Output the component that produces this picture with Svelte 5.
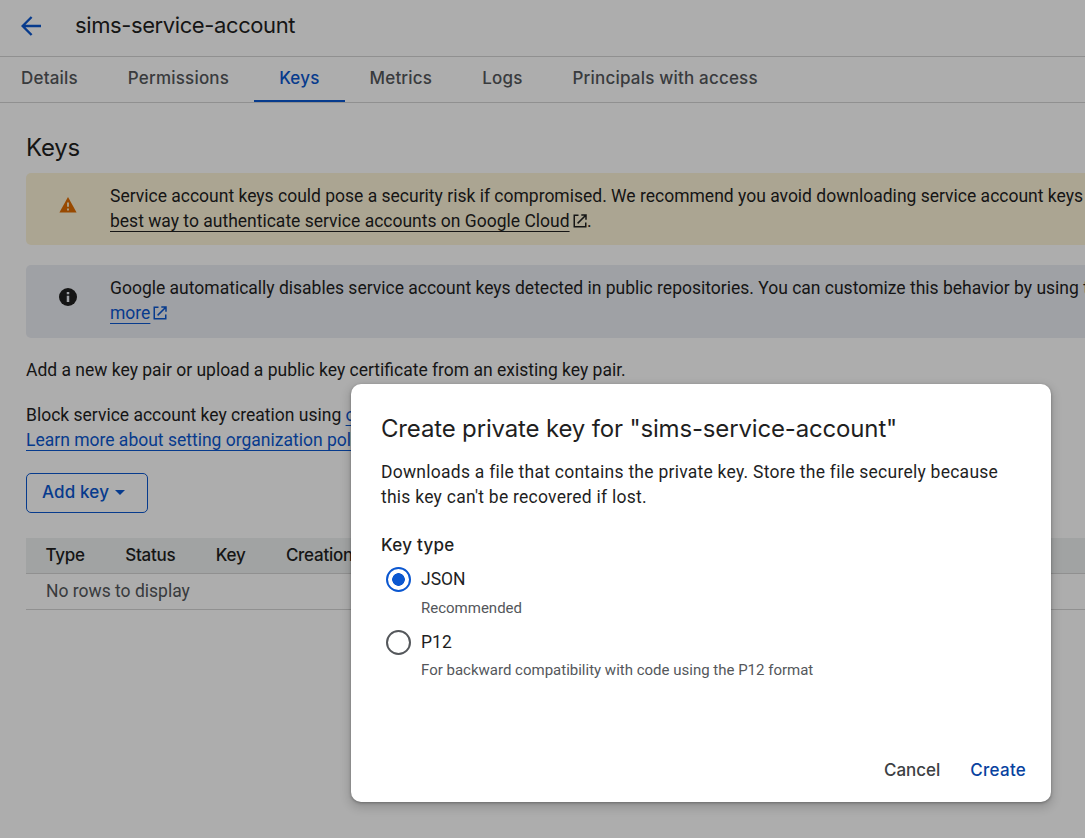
<script>
  const tabs = ['Details', 'Permissions', 'Keys', 'Metrics', 'Logs', 'Principals with access'];
  const columns = ['Type', 'Status', 'Key', 'Creation date', 'Expiration date'];
  const options = [
    { id: 'json', label: 'JSON', hint: 'Recommended' },
    { id: 'p12', label: 'P12', hint: 'For backward compatibility with code using the P12 format' }
  ];
  let active = $state('Keys');
  let keyType = $state('json');
</script>

{#snippet external()}
  <svg class="ext" viewBox="0 0 14 14" width="14" height="14" fill="none" stroke="currentColor" stroke-width="1.5">
    <path d="M5.5 1.25H1.25V12.75H12.75V8.5M8.3 1H13V5.7M12.8 1.2L4.6 9.4" />
  </svg>
{/snippet}

<div class="screen">
  <div class="page">
    <header>
      <svg class="back" viewBox="0 0 20 20" width="20" height="20" fill="none" stroke="currentColor" stroke-width="2.4">
        <path d="M20 10H2M10.6 1L1.6 10L10.6 19" />
      </svg>
      <span class="title">sims-service-account</span>
    </header>
    <nav>
      {#each tabs as tab}
        <button class="tab" class:active={tab === active} onclick={() => (active = tab)}>{tab}</button>
      {/each}
    </nav>
    <main>
      <h1>Keys</h1>
      <div class="banner warn">
        <svg viewBox="0 0 18 16" width="18" height="16"><path d="M9 0L17.6 15.5H0.4Z" fill="#e06c00" /><path d="M9 5.4V9.8M9 11.4V13.4" stroke="#fdf4d8" stroke-width="1.8" /></svg>
        <p>Service account keys could pose a security risk if compromised. We recommend you avoid downloading service account keys<br /><a class="dark" href="#auth">best way to authenticate service accounts on Google Cloud</a> {@render external()}.</p>
      </div>
      <div class="banner info">
        <svg viewBox="0 0 18 18" width="18" height="18"><circle cx="9" cy="9" r="9" fill="#1f1f1f" /><path d="M9 4V6.2M9 7.8V14" stroke="#ebedf3" stroke-width="2.5" /></svg>
        <p>Google automatically disables service account keys detected in public repositories. You can customize this behavior by using the<br /><a href="#more">more</a> <span class="blue">{@render external()}</span></p>
      </div>
      <p class="intro">Add a new key pair or upload a public key certificate from an existing key pair.</p>
      <p class="block">Block service account key creation using <a href="#org">o</a><br /><a href="#learn">Learn more about setting organization poli</a></p>
      <button class="add">Add key <span class="caret"></span></button>
      <div class="table">
        <div class="head">
          {#each columns.slice(0, 4) as column}<span>{column}</span>{/each}
        </div>
        <div class="empty">No rows to display</div>
      </div>
    </main>
  </div>
  <div class="scrim"></div>
  <div class="dialog" role="dialog" aria-labelledby="dialog-title">
    <h2 id="dialog-title">Create private key for "sims-service-account"</h2>
    <p class="desc">Downloads a file that contains the private key. Store the file securely because this key can't be recovered if lost.</p>
    <h3>Key type</h3>
    {#each options as option}
      <button class="option {option.id}" onclick={() => (keyType = option.id)}>
        <span class="radio" class:on={keyType === option.id}></span>
        <span class="label">{option.label}</span>
        <span class="hint">{option.hint}</span>
      </button>
    {/each}
    <div class="actions">
      <button class="cancel">Cancel</button>
      <button class="create">Create</button>
    </div>
  </div>
</div>

<style>
  :global(body) { margin: 0; background: #fff; }
  .screen {
    position: relative;
    width: 1085px;
    height: 838px;
    overflow: hidden;
    background: #fff;
    color: #1f1f1f;
    font-family: Roboto, "Liberation Sans", sans-serif;
    font-size: 17.5px;
    line-height: 25px;
  }
  button { padding: 0; border: 0; background: none; color: inherit; font: inherit; text-align: left; }
  h1, h2, h3, p { margin: 0; }
  header { display: flex; align-items: center; height: 56px; box-sizing: border-box; padding: 0 0 4px 21px; }
  .back { color: #0b57d0; flex: none; }
  .title { margin: -2px 0 0 34px; font: 400 22px/28px Inter, sans-serif; letter-spacing: -0.4px; }
  nav { display: flex; height: 47px; box-sizing: border-box; border-top: 1px solid #d5d5d5; border-bottom: 1px solid #d5d5d5; margin-left: -4px; }
  .tab {
    box-sizing: border-box;
    height: 45px;
    padding: 0 25px;
    border-bottom: 2px solid transparent;
    color: #54575b;
    font: 500 17px/41px Inter, sans-serif;
    letter-spacing: 0.19px;
    white-space: nowrap;
  }
  .tab.active { color: #0b57d0; border-color: #0b57d0; }
  main { width: 1180px; padding: 29px 0 0 26px; }
  h1 { height: 42px; font: 400 24px/32px Inter, sans-serif; letter-spacing: -0.2px; }
  .banner { display: flex; align-items: flex-start; height: 72px; box-sizing: border-box; padding: 11px 0 0 33px; border-radius: 5px; white-space: nowrap; }
  .banner > svg { flex: none; width: 18px; margin: 13px 33px 0 0; }
  .warn { margin-top: -1px; background: #fdf4d8; }
  .info { height: 73px; margin-top: 20px; background: #ebedf3; }
  .info > svg { margin-top: 12px; }
  a { color: #0b57d0; text-decoration: underline; text-decoration-thickness: 1px; text-underline-offset: 4px; text-decoration-skip-ink: none; }
  a.dark { color: #1f1f1f; }
  .blue { color: #0b57d0; margin-left: -1px; }
  .ext { vertical-align: -1px; margin-left: -1px; }
  .intro { margin-top: 20px; }
  .block { margin-top: 20px; white-space: nowrap; }
  .add {
    display: flex;
    align-items: center;
    box-sizing: border-box;
    width: 122px;
    height: 40px;
    margin-top: 20px;
    padding: 0 0 2px 15px;
    border: 1px solid #0b57d0;
    border-radius: 5px;
    color: #0b57d0;
    font: 500 17px/24px Inter, sans-serif;
    letter-spacing: 0.15px;
  }
  .caret { margin: 0 0 0 6px; border: 5px solid transparent; border-top-color: currentColor; border-bottom: 0; }
  .table { margin-top: 25px; }
  .head {
    display: flex;
    gap: 40.4px;
    height: 36px;
    box-sizing: border-box;
    padding-left: 19.5px;
    border-bottom: 1px solid #d5d5d5;
    background: #edf1f0;
    font: 500 17px/34px Inter, sans-serif;
    letter-spacing: -0.25px;
    white-space: nowrap;
  }
  .empty { height: 36px; box-sizing: border-box; padding-left: 20px; border-bottom: 1px solid #d5d5d5; color: #54575b; line-height: 35px; }
  .scrim { position: absolute; inset: 0; background: rgba(0, 0, 0, 0.32); }
  .dialog {
    position: absolute;
    left: 351px;
    top: 384px;
    display: flex;
    flex-direction: column;
    box-sizing: border-box;
    width: 700px;
    height: 418px;
    padding: 30px 25px 14px 30px;
    border-radius: 10px;
    background: #fff;
    box-shadow: 0 1px 3px rgba(0, 0, 0, 0.3), 0 4px 10px 2px rgba(0, 0, 0, 0.15);
  }
  h2 { font: 400 24px/30px Inter, sans-serif; letter-spacing: -0.16px; white-space: nowrap; }
  .desc { width: 630px; margin-top: 16px; letter-spacing: 0.25px; }
  h3 { margin-top: 23px; font: 500 17px/24px Inter, sans-serif; letter-spacing: 0.27px; }
  .option { display: grid; grid-template-columns: 25px 1fr; column-gap: 10px; align-items: center; padding-left: 5px; }
  .json { margin-top: 10px; }
  .p12 { margin-top: 12px; }
  .radio { box-sizing: border-box; width: 25px; height: 25px; border: 2px solid #54575b; border-radius: 50%; }
  .radio.on { border-color: #0b57d0; background: radial-gradient(circle, #0b57d0 6px, transparent 6.6px); }
  .hint { grid-column: 2; margin-top: 6px; color: #54575b; font-size: 15px; line-height: 20px; }
  .p12 .hint { margin-top: 5px; }
  .actions { display: flex; justify-content: flex-end; gap: 30px; margin-top: auto; font: 500 17px/36px Inter, sans-serif; }
  .cancel { color: #3c4043; }
  .create { color: #0842a0; letter-spacing: 0.25px; }
</style>
